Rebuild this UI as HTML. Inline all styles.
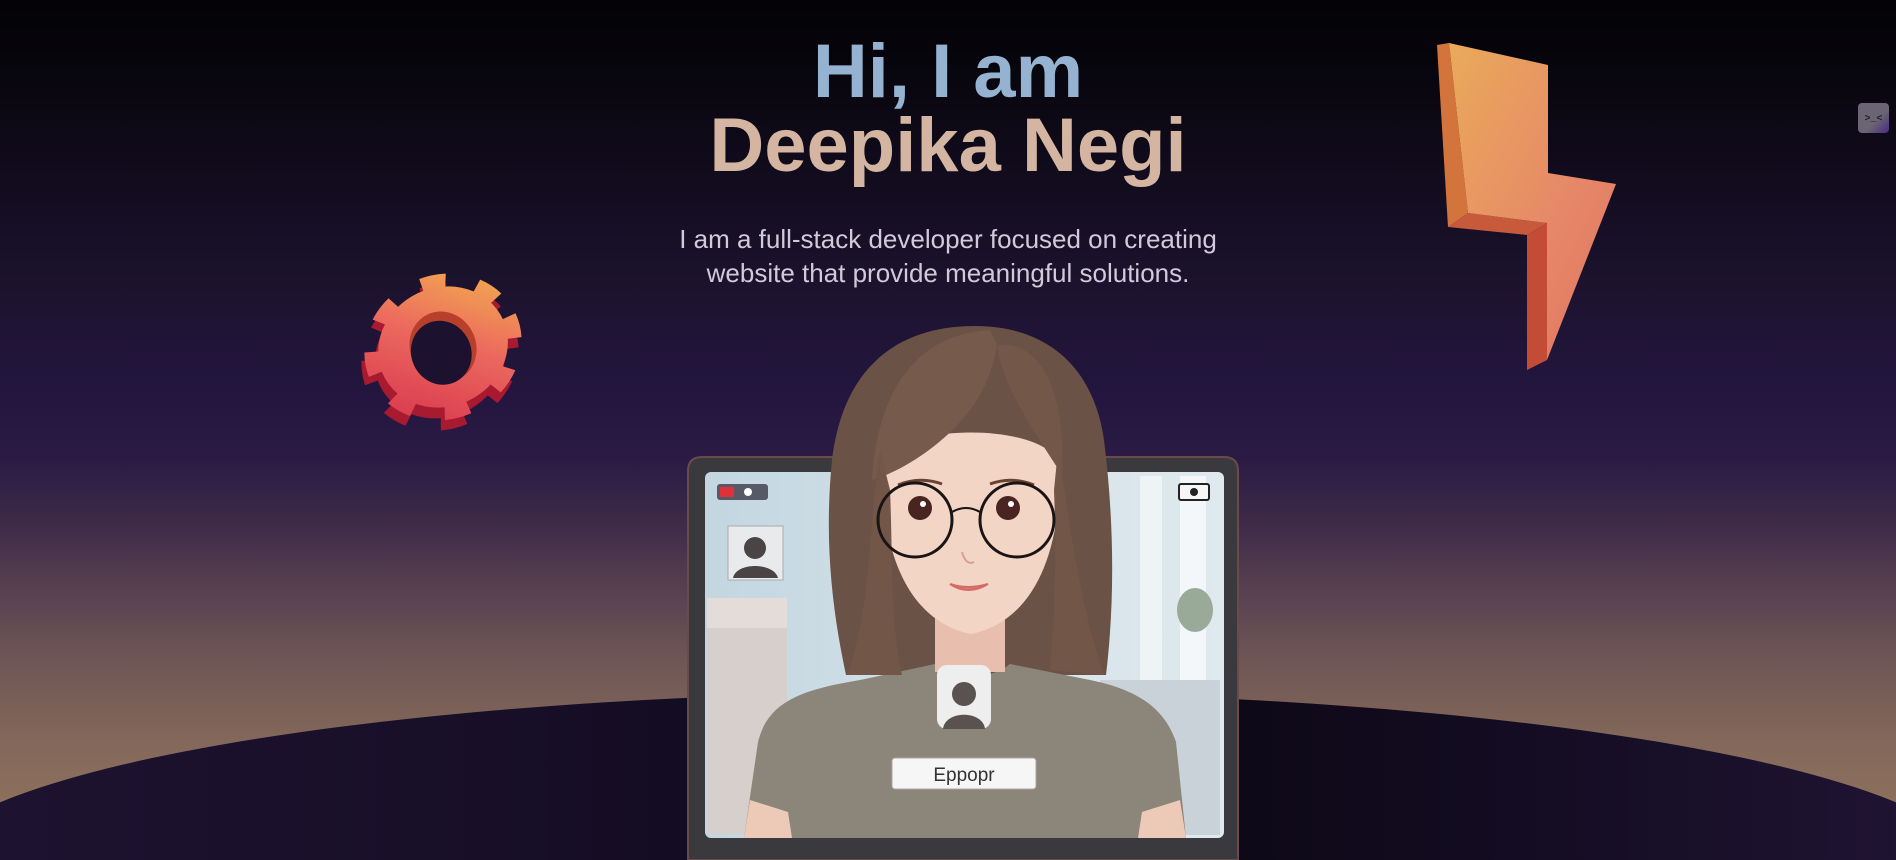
<!DOCTYPE html>
<html><head><meta charset="utf-8"><style>
*{margin:0;padding:0;box-sizing:border-box}
html,body{width:1896px;height:860px;overflow:hidden}
#w{position:relative;width:1896px;height:860px;overflow:hidden;font-family:"Liberation Sans",sans-serif;
background:linear-gradient(180deg,#030205 0px,#07050c 60px,#120c1e 180px,#1d1330 300px,#241640 400px,#2b1b44 460px,#3d2a48 520px,#574050 590px,#6f5655 660px,#83675a 740px,#957860 860px);}
.ell{position:absolute;left:-80px;top:692px;width:2056px;height:168px;overflow:hidden}
.ell div{position:absolute;left:0;top:0;width:2056px;height:360px;border-radius:50%;
background:linear-gradient(90deg,#1e1331 0%,#170e27 30%,#0b0712 58%,#150d24 80%,#211535 100%);}
h1{position:absolute;left:0;width:1896px;text-align:center;font-weight:700;font-size:76px;line-height:1;}
.l1{top:34px;color:#95b3d0}
.l2{top:108px;color:#d4b5a2}
p.sub{position:absolute;left:0;width:1896px;top:222px;text-align:center;font-size:26px;line-height:34px;color:#d2cad9}
svg{position:absolute;left:0;top:0;overflow:hidden}
</style></head><body><div id="w">
<div class="ell"><div></div></div>
<h1 class="l1">Hi, I am</h1>
<h1 class="l2">Deepika Negi</h1>
<p class="sub">I am a full-stack developer focused on creating<br>website that provide meaningful solutions.</p>
<svg width="1896" height="860" viewBox="0 0 1896 860">
<defs>
<linearGradient id="gg" x1="0" y1="1" x2="1" y2="0"><stop offset="0" stop-color="#d8354e"/><stop offset="0.55" stop-color="#ec6a5e"/><stop offset="1" stop-color="#f2b04e"/></linearGradient>
<linearGradient id="lg" x1="0" y1="0" x2="1" y2="1"><stop offset="0" stop-color="#eaaa5a"/><stop offset="0.6" stop-color="#e68868"/><stop offset="1" stop-color="#e07262"/></linearGradient>
<linearGradient id="ic" x1="0" y1="0" x2="1" y2="1"><stop offset="0.6" stop-color="#6a6474"/><stop offset="1" stop-color="#4a2a80"/></linearGradient>
<linearGradient id="scr" x1="0" y1="0" x2="1" y2="0"><stop offset="0" stop-color="#c3d6e0"/><stop offset="0.5" stop-color="#d5e2ea"/><stop offset="1" stop-color="#dfe9ee"/></linearGradient>
</defs>
<g transform="translate(443,347) rotate(-25) scale(1,0.9)">
<g transform="translate(-7,9)" fill="#a81a30" stroke="#a81a30">
<circle r="66"/><circle r="70" fill="none" stroke-width="20" stroke-dasharray="24 32.5"/></g>
<circle r="66" fill="url(#gg)"/>
<circle r="70" fill="none" stroke="url(#gg)" stroke-width="20" stroke-dasharray="24 32"/>
<ellipse rx="33" ry="40" fill="#b8402a"/>
<ellipse cx="-4" cy="5" rx="30" ry="36" fill="#1c1230"/>
</g>
<polygon points="1437,45 1449,43 1468,213 1448,227" fill="#d2743c"/>
<polygon points="1448,227 1468,213 1547,223 1527,235" fill="#c85a3c"/>
<polygon points="1527,235 1547,223 1547,360 1527,370" fill="#c24c36"/>
<polygon points="1449,43 1548,65 1548,173 1616,184 1547,360 1547,223 1468,213" fill="url(#lg)"/>
<rect x="1858" y="103" width="31" height="30" rx="4" fill="url(#ic)"/>
<text x="1873.5" y="121" text-anchor="middle" font-family="Liberation Mono,monospace" font-size="10" font-weight="700" fill="#222">&gt;_&lt;</text>
<path d="M688,860 L688,471 Q688,457 702,457 L1224,457 Q1238,457 1238,471 L1238,860 Z" fill="#3a393d" stroke="#6a4a4a" stroke-width="2"/>
<rect x="705" y="472" width="519" height="366" rx="6" fill="url(#scr)"/>
<rect x="707" y="598" width="80" height="236" fill="#d6cfcc"/>
<rect x="707" y="598" width="80" height="30" fill="#e3dcd8"/>
<rect x="1140" y="476" width="22" height="300" fill="#eef3f6"/>
<rect x="1180" y="476" width="26" height="300" fill="#f3f7f9"/>
<rect x="1100" y="680" width="120" height="155" fill="#c9d2d8"/>
<ellipse cx="1195" cy="610" rx="18" ry="22" fill="#9aaa98"/>
<rect x="717" y="484" width="51" height="16" rx="3" fill="#555a66"/>
<rect x="720" y="487" width="14" height="10" fill="#e0303a"/>
<circle cx="748" cy="492" r="4" fill="#fff"/>
<rect x="1179" y="484" width="30" height="16" rx="2" fill="#f6f6f6" stroke="#222" stroke-width="2"/>
<circle cx="1194" cy="492" r="4" fill="#222"/>
<rect x="728" y="526" width="55" height="54" fill="#e8eaec" stroke="#aaa"/>
<circle cx="755" cy="548" r="11" fill="#4a4444"/>
<path d="M733,578 C736,562 774,562 778,578 Z" fill="#4a4444"/>
<path d="M975,326 C890,326 842,375 832,460 C824,540 832,610 846,675 L1106,675 C1115,600 1114,520 1104,440 C1094,370 1050,326 975,326 Z" fill="#6b5246"/>
<path d="M744,838 L758,742 C768,702 800,690 860,680 L935,664 C960,680 990,680 1010,664 L1090,680 C1140,690 1165,710 1176,742 L1186,838 Z" fill="#8c857a"/>
<path d="M744,838 L750,800 L788,812 L792,838 Z" fill="#edc9b8"/>
<path d="M1186,838 L1180,800 L1142,812 L1138,838 Z" fill="#edc9b8"/>
<rect x="935" y="600" width="70" height="72" fill="#e8bfae"/>
<path d="M882,470 C882,560 912,622 971,634 C1030,622 1060,560 1060,470 C1060,420 882,420 882,470 Z" fill="#f3d5c6"/>
<path d="M990,330 C920,334 878,385 872,480 C905,470 940,445 962,420 C980,400 992,375 997,345 Z" fill="#765a4c"/>
<path d="M997,345 C1002,385 1030,425 1062,475 C1066,400 1045,340 997,345 Z" fill="#735748"/>
<path d="M880,450 C868,530 872,600 848,675 L902,675 C890,620 893,560 890,490 Z" fill="#725648"/>
<path d="M1058,450 C1070,520 1078,600 1104,675 L1050,670 C1056,600 1056,540 1054,490 Z" fill="#725648"/>
<path d="M898,485 Q920,476 942,484" stroke="#6a4232" stroke-width="3" fill="none"/>
<path d="M990,484 Q1012,476 1034,485" stroke="#6a4232" stroke-width="3" fill="none"/>
<ellipse cx="920" cy="508" rx="12" ry="12" fill="#4a2420"/>
<ellipse cx="1008" cy="508" rx="12" ry="12" fill="#4a2420"/>
<circle cx="923" cy="504" r="3" fill="#fff"/>
<circle cx="1011" cy="504" r="3" fill="#fff"/>
<circle cx="915" cy="520" r="37" fill="none" stroke="#1a1414" stroke-width="3"/>
<circle cx="1017" cy="520" r="37" fill="none" stroke="#1a1414" stroke-width="3"/>
<path d="M952,512 Q966,504 980,512" stroke="#1a1414" stroke-width="2" fill="none"/>
<path d="M962,552 Q966,566 974,562" stroke="#d4a090" stroke-width="2" fill="none"/>
<path d="M950,584 Q968,596 988,584 Q968,590 950,584 Z" fill="#e07a72" stroke="#d46a66" stroke-width="2"/>
<rect x="937" y="665" width="54" height="64" rx="10" fill="#eeeeee"/>
<circle cx="964" cy="694" r="12" fill="#5a5250"/>
<path d="M943,729 C945,710 983,710 985,729 Z" fill="#5a5250"/>
<rect x="892" y="758" width="144" height="31" rx="3" fill="#f6f6f6" stroke="#b0a8a8"/>
<text x="964" y="781" text-anchor="middle" font-family="Liberation Sans,sans-serif" font-size="19" fill="#333">Eppopr</text>
</svg>
</div></body></html>
